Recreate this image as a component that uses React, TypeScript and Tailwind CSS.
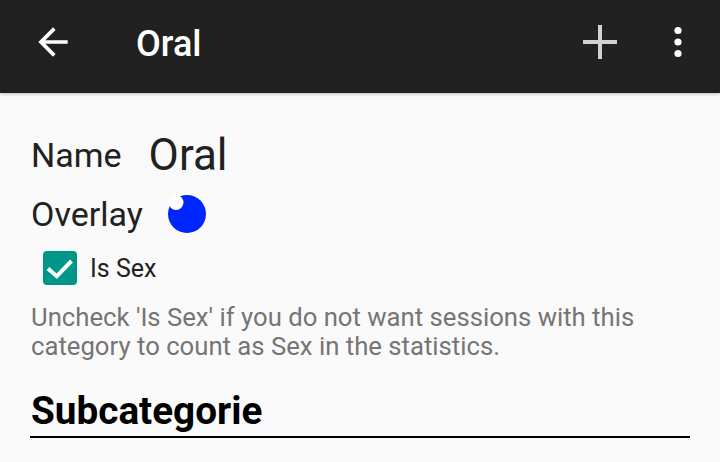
import { useState } from "react";

function BackArrow() {
  return (
    <svg viewBox="0 0 24 24" className="w-[44px] h-[44px]" fill="#ffffff">
      <path d="M20 11H7.83l5.59-5.59L12 4l-8 8 8 8 1.41-1.41L7.83 13H20v-2z" />
    </svg>
  );
}

function PlusIcon() {
  return (
    <svg viewBox="0 0 34 34" className="w-[34px] h-[34px]">
      <path d="M17 0v34M0 17h34" stroke="#d2d2d2" strokeWidth="4" />
    </svg>
  );
}

function MoreIcon() {
  return (
    <svg viewBox="0 0 10 32" className="w-[10px] h-[32px]" fill="#ffffff">
      <circle cx="5" cy="4.5" r="3.6" />
      <circle cx="5" cy="16" r="3.6" />
      <circle cx="5" cy="27.5" r="3.6" />
    </svg>
  );
}

function OverlayDot() {
  return (
    <svg viewBox="0 0 38 38" className="w-[38px] h-[38px]">
      <circle cx="19" cy="19" r="19" fill="#0026ff" />
      <circle cx="8" cy="7.5" r="7.5" fill="#ffffff" />
    </svg>
  );
}

export default function App() {
  const [isSex, setIsSex] = useState(true);

  return (
    <div className="w-[720px] h-[462px] overflow-hidden bg-[#fafafa] font-['Roboto',_'Liberation_Sans',_sans-serif]">
      {/* Toolbar */}
      <div className="h-[93px] bg-[#212121] flex items-center pb-[10px] shadow-[0_1px_3px_rgba(0,0,0,0.25)]">
        <div className="ml-[31px]">
          <BackArrow />
        </div>
        <div className="ml-[61px] text-[36px] leading-[42px] font-medium text-white mt-[4px]">Oral</div>
        <div className="ml-auto mr-[56px]">
          <PlusIcon />
        </div>
        <div className="mr-[37px]">
          <MoreIcon />
        </div>
      </div>

      <div className="px-[30px]">
        {/* Name */}
        <div className="mt-[37px] h-[50px] flex items-center gap-[27px] pl-[1px]">
          <span className="text-[34px] leading-[40px] text-[#212121]">Name</span>
          <span className="text-[44px] leading-[50px] text-[#212121]">Oral</span>
        </div>

        {/* Overlay */}
        <div className="mt-[14px] h-[40px] flex items-center gap-[25px] pl-[1px]">
          <span className="text-[34px] leading-[40px] text-[#212121]">Overlay</span>
          <OverlayDot />
        </div>

        {/* Is Sex checkbox */}
        <label className="mt-[17px] ml-[13px] h-[34px] flex items-center gap-[13px] cursor-pointer">
          <button
            onClick={() => setIsSex(!isSex)}
            className={`w-[34px] h-[34px] rounded-[4px] flex items-center justify-center ${isSex ? "bg-[#009688]" : "border-2 border-[#757575]"}`}
          >
            {isSex && (
              <svg viewBox="0 0 34 34" className="w-[34px] h-[34px]">
                <path d="M5 17.5l8.7 7.8L28.5 10" fill="none" stroke="#ffffff" strokeWidth="4" />
              </svg>
            )}
          </button>
          <span className="text-[25px] leading-[34px] mt-[2px] text-[#212121]">Is Sex</span>
        </label>

        {/* Help text */}
        <p className="mt-[18px] pl-[1px] text-[25.7px] leading-[29px] text-[#757575] w-[650px]">
          Uncheck 'Is Sex' if you do not want sessions with this category to count as Sex in the statistics.
        </p>

        {/* Subcategorie header */}
        <div className="mt-[28px] pb-[3px] border-b-[2px] border-black">
          <h2 className="pl-[1px] text-[38.7px] leading-[44px] font-bold text-black">Subcategorie</h2>
        </div>
      </div>
    </div>
  );
}
